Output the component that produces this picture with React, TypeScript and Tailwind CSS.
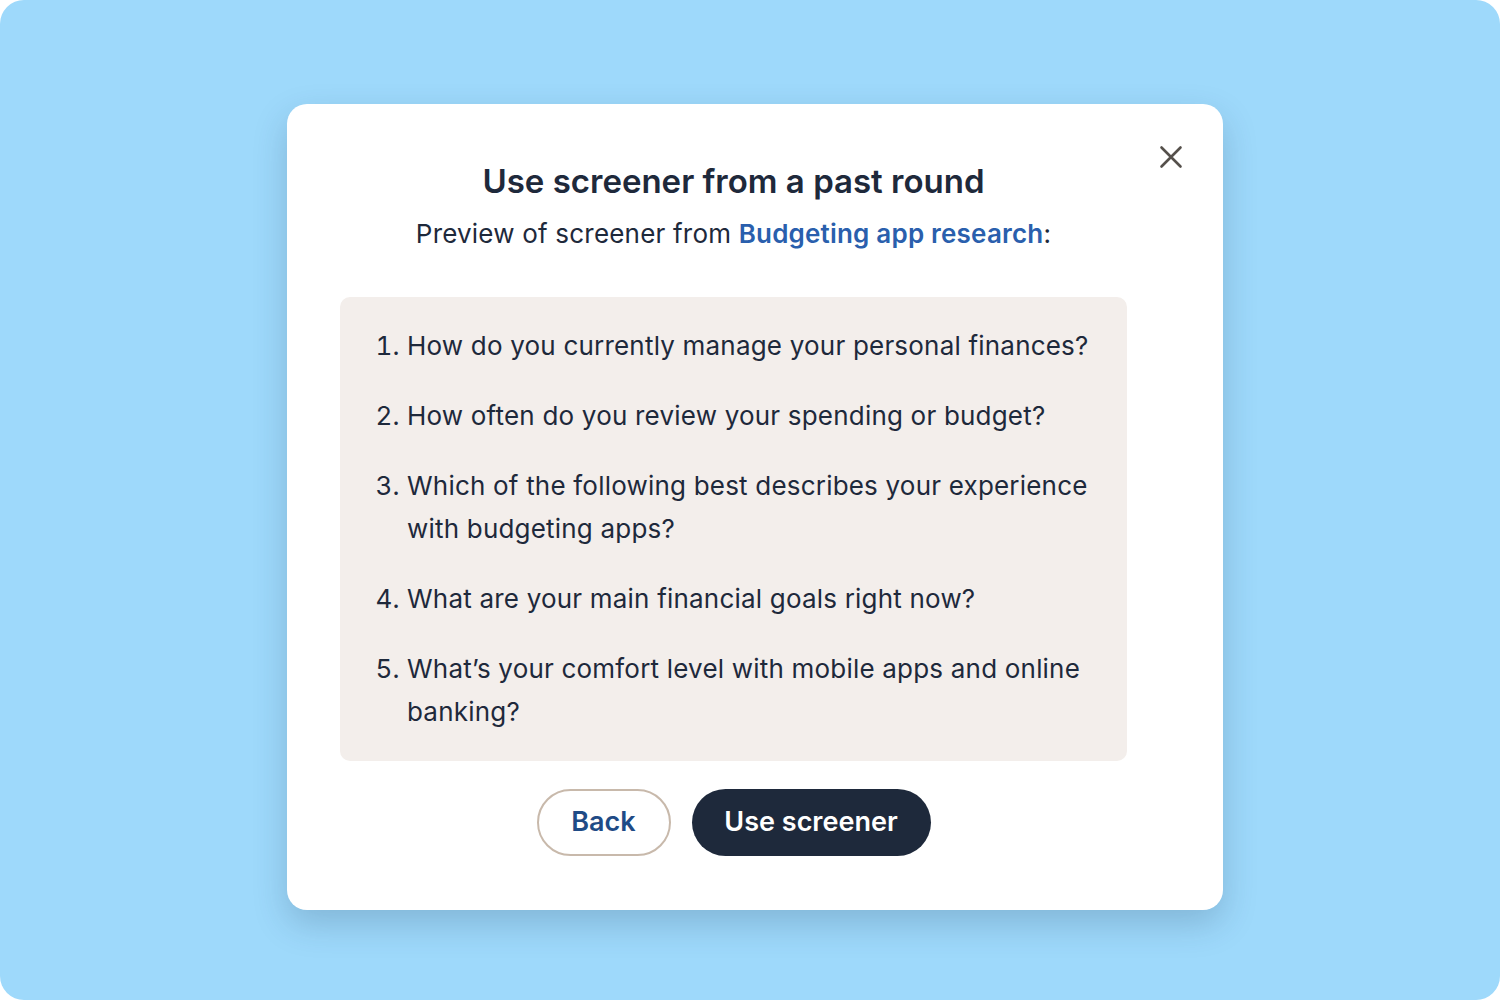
const questions = [
  'How do you currently manage your personal finances?',
  'How often do you review your spending or budget?',
  'Which of the following best describes your experience with budgeting apps?',
  'What are your main financial goals right now?',
  'What\u2019s your comfort level with mobile apps and online banking?',
]

const App = () => {
  return (
    <div className="w-[1500px] h-[1000px] bg-white font-['Inter',sans-serif]">
      <div className="w-full h-full rounded-[24px] bg-[#9ed9fb] flex justify-center items-start pt-[104px] pl-[10px]">
        <div className="relative w-[936px] bg-white rounded-[20px] shadow-[0_14px_34px_rgba(30,60,90,0.22)] pl-[53px] pr-[96px] pt-[57px] pb-[54px]">
          <button className="absolute left-[872px] top-[41px] w-[24px] h-[24px] text-[#55504b]" aria-label="Close">
            <svg viewBox="0 0 24 24" width="24" height="24" fill="none" stroke="currentColor" strokeWidth="2.6" strokeLinecap="round">
              <path d="M2.5 2.5 L21.5 21.5 M21.5 2.5 L2.5 21.5" />
            </svg>
          </button>
          <h1 className="text-center text-[33px] leading-[40px] font-semibold text-[#1e293b]">
            Use screener from a past round
          </h1>
          <p className="mt-[17px] text-center text-[26px] leading-[32px] tracking-[0.2px] text-[#1e293b]">
            Preview of screener from <span className="font-semibold text-[#2a5fad]">Budgeting app research</span>:
          </p>
          <div className="mt-[47px] rounded-[10px] bg-[#f3eeeb] pl-[36px] pr-[24px] pt-[27px] pb-[28px]">
            <ol className="list-decimal pl-[31px] flex flex-col gap-[27px]">
              {questions.map((q, i) => (
                <li key={i} className="text-[26px] leading-[43px] tracking-[0.2px] text-[#1e293b]">
                  {q}
                </li>
              ))}
            </ol>
          </div>
          <div className="mt-[28px] flex justify-center gap-[21px]">
            <button className="w-[134px] h-[67px] rounded-full border-2 border-[#c8b9ab] text-[27px] font-semibold text-[#1f4b86]">
              Back
            </button>
            <button className="w-[239px] h-[67px] rounded-full bg-[#1e293b] text-[27px] font-semibold text-white">
              Use screener
            </button>
          </div>
        </div>
      </div>
    </div>
  )
}

export default App
